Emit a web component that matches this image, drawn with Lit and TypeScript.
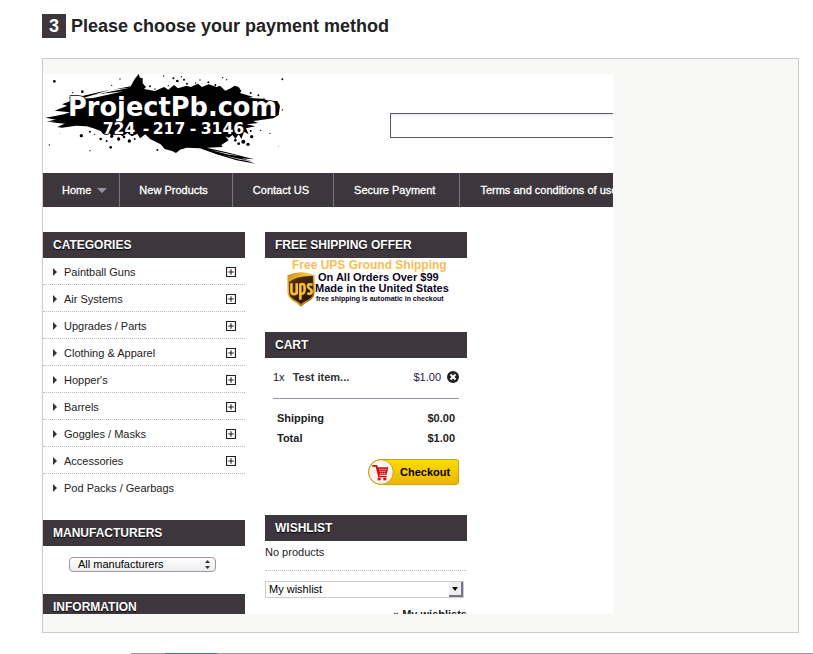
import { LitElement, html, css, svg } from "lit";
import { customElement } from "lit/decorators.js";

const NAV = ["Home", "New Products", "Contact US", "Secure Payment", "Terms and conditions of use"];

const CATEGORIES = [
  { name: "Paintball Guns", open: true },
  { name: "Air Systems", open: true },
  { name: "Upgrades / Parts", open: true },
  { name: "Clothing & Apparel", open: true },
  { name: "Hopper's", open: true },
  { name: "Barrels", open: true },
  { name: "Goggles / Masks", open: true },
  { name: "Accessories", open: true },
  { name: "Pod Packs / Gearbags", open: false },
];

// Paint drops around the logo: x, y, radius
const DROPS = [
  [43, 49, 4], [127, 80, 4], [124, 212, 5], [212, 247, 4], [150, 257, 2], [98, 83, 2], [28, 240, 2],
  [182, 222, 4], [200, 228, 3], [215, 214, 5], [236, 222, 5], [252, 216, 4], [268, 228, 5], [284, 222, 3],
  [352, 255, 3], [596, 236, 4], [610, 230, 6], [624, 238, 5], [635, 215, 5], [632, 198, 3], [586, 226, 4],
  [727, 43, 3], [727, 135, 2], [632, 84, 3], [655, 91, 3], [672, 101, 2], [548, 38, 2], [560, 44, 2],
  [400, 40, 3], [412, 48, 4], [432, 44, 3], [441, 56, 3], [385, 62, 2], [371, 33, 2], [424, 35, 2],
  [240, 42, 2], [215, 61, 2], [330, 64, 3], [345, 72, 2], [480, 45, 2], [467, 54, 2], [505, 52, 3],
  [526, 60, 3], [662, 196, 2], [690, 205, 2], [716, 245, 1], [150, 200, 3], [164, 208, 2], [60, 205, 1],
];

const logo = svg`
  <svg class="logo" viewBox="9 27 726 276" role="img" aria-label="ProjectPb.com">
    <path d="M16 158 L46 153 L72 148 L90 142 L44 137 L82 122 L66 118 L92 108 L88 97 L142 98 L136 91 L176 88 L230 72
      L272 64 L284 42 L296 27 L300 38 L308 40 L308 55 L318 66 L312 72 L345 78 L372 66 L385 74 L402 60 L414 70 L440 62
      L452 66 L474 56 L486 66 L506 58 L530 66 L540 62 L556 77 L572 70 L584 62 L596 66 L604 78 L600 84 L640 96 L625 99
      L668 101 L690 108 L712 108 L720 122 L716 150 L700 160 L668 164 L640 168 L654 174 L620 178 L646 184 L618 190
      L626 208 L612 200 L604 222 L596 208 L586 222 L578 210 L566 218 L556 214 L566 226 L544 240 L548 246 L500 248
      L560 262 L642 283 L600 280 L646 296 L590 286 L530 268 L480 250 L440 248 L420 254 L408 264 L396 258 L374 252
      L362 238 L330 222 L316 208 L300 220 L292 206 L276 214 L262 204 L248 214 L232 204 L216 212 L204 202 L190 208
      L182 198 L160 190 L140 184 L108 182 L66 188 L52 186 L74 176 L34 172 L56 166 Z"/>
    <path d="M100 96 L200 76 L270 68 L190 84 Z M90 103 L150 90 L250 79 L160 99 Z" fill="#fff"/>
    <path d="M70 118 L130 92 L210 74 L132 98 Z M20 170 L50 163 L80 170 Z M490 252 L560 264 L640 290 L550 268 Z"/>
    <path d="M510 254 L600 274 L560 268 Z M550 271 L630 289 L600 284 Z" fill="#fff"/>
    ${DROPS.map(([x, y, r]) => svg`<circle cx=${x} cy=${y} r=${r} />`)}
    <text class="logo-name" x="84" y="152">ProjectPb.com</text>
    <text class="logo-phone" x="188" y="206">724</text>
    <text class="logo-phone" x="308" y="206">-</text>
    <text class="logo-phone" x="338" y="206">217</text>
    <text class="logo-phone" x="449" y="206">-</text>
    <text class="logo-phone" x="482" y="206">3146</text>
  </svg>`;

const upsShield = svg`
  <svg class="shield" viewBox="0 0 84 106" role="img" aria-label="UPS">
    <defs>
      <linearGradient id="gold" x1="0" y1="0" x2="1" y2="1">
        <stop offset="0" stop-color="#c98a12"/><stop offset=".4" stop-color="#f8c536"/><stop offset="1" stop-color="#7c4a08"/>
      </linearGradient>
      <linearGradient id="brown" x1="0" y1="0" x2="1" y2="1">
        <stop offset="0" stop-color="#5a3510"/><stop offset="1" stop-color="#1f0f04"/>
      </linearGradient>
    </defs>
    <path d="M1 10 Q42 -8 83 10 V62 Q83 78 68 87 Q52 94 42 105 Q32 94 16 87 Q1 78 1 62 Z" fill="url(#gold)"/>
    <path d="M6 30 Q30 10 78 12 V62 Q78 75 64 83 Q50 89 42 97 Q34 89 20 83 Q6 75 6 62 Z" fill="url(#brown)"/>
    <g fill="none" stroke="#f3bd35" stroke-width="8">
      <path d="M13 34 V58 Q13 67 20 67 Q25 67 29 64 V34"/>
      <path d="M40 84 V38 Q53 32 53 48 V54 Q53 68 40 66"/>
      <path d="M77 39 Q63 34 63 43 Q63 48 69 51 Q76 55 74 62 Q70 69 61 64"/>
    </g>
  </svg>`;

const cartIcon = svg`
  <svg class="cart-icon" viewBox="0 0 78 78" aria-hidden="true">
    <circle cx="39" cy="39" r="37" fill="#f6f5ef" stroke="#c9a21a" stroke-width="3"/>
    <g fill="#c8140c">
      <path d="M13 18 H27 L30 25 H61 L56 47 H34 L36 51 H56 V55 H31 L23 23 H13 Z"/>
      <rect x="29" y="56" width="9" height="8"/><rect x="46" y="56" width="9" height="8"/>
    </g>
    <path d="M34 31 H56 M35 37 H54 M37 43 H52" stroke="#fff" stroke-width="3" stroke-dasharray="3 3"/>
  </svg>`;

@customElement("app-root")
export class AppRoot extends LitElement {
  static styles = css`
    :host {
      display: block;
      font: 11px/14px "Liberation Sans", Arial, sans-serif;
      color: #222;
      background: #fff;
    }
    * { box-sizing: border-box; }
    a { color: inherit; text-decoration: none; }
    ul { list-style: none; margin: 0; padding: 0; }
    h1, h2, p { margin: 0; }
    button, select, input { font: inherit; color: #000; margin: 0; }
    main { padding: 14px 14px 0 42px; }
    h1 { display: flex; gap: 5px; font-size: 18px; line-height: 24px; color: #222; }
    .step { width: 24px; text-align: center; background: #3d363d; color: #fff; }
    .panel {
      margin-top: 20px;
      padding: 15px 0 18px;
      border: 1px solid #ccc;
      background: #f8f8f6;
    }
    .frame { max-width: 570px; height: 540px; overflow: hidden; background: #fff; }
    .head { display: flex; gap: 105px; height: 99px; }
    .logo { display: block; flex: none; width: 242px; height: 92px; }
    .logo-name, .logo-phone {
      font-family: "DejaVu Sans", sans-serif;
      font-weight: bold;
      fill: #fff;
      stroke: #000;
      stroke-width: 4px;
      paint-order: stroke;
    }
    .logo-name { font-size: 77px; }
    .logo-phone { font-size: 47px; }
    .search {
      flex: none;
      width: 300px;
      height: 25px;
      margin-top: 39px;
      border: 1px solid #5d5969;
      border-radius: 0;
      background: #fff;
      box-shadow: inset 0 2px 2px #eee;
    }
    nav ul { display: flex; width: max-content; min-width: 100%; background: #3d363d; }
    nav li + li { border-left: 1px solid #77738a; }
    nav a {
      display: flex;
      align-items: center;
      gap: 6px;
      height: 34px;
      padding: 0 24px 0 20px;
      color: #fff;
      -webkit-text-stroke: 0.3px #fff;
    }
    nav li:first-child a { padding: 0 12px 0 19px; }
    nav li:nth-child(2) a { padding-left: 19px; }
    .down { border: 5px solid transparent; border-top-color: #9593a8; border-bottom: 0; }
    .columns { display: flex; gap: 20px; margin-top: 25px; }
    .column { flex: none; width: 202px; }
    h2 {
      height: 26px;
      padding: 0 10px;
      font-size: 12px;
      line-height: 26px;
      color: #fff;
      background: #3d363d;
      text-shadow: 0 1px 1px #000;
      text-transform: uppercase;
    }
    .categories li {
      display: flex;
      align-items: center;
      gap: 7px;
      height: 27px;
      padding: 2px 9px 0 10px;
      border-bottom: 1px dotted #bbb;
    }
    .categories li:last-child { border-color: transparent; }
    .categories a { flex: 1; }
    .arrow { border: 4px solid transparent; border-left-color: #333; border-right: 0; }
    .expand { display: flex; width: 10px; height: 10px; padding: 0; border: 0; background: none; }
    .expand svg { display: block; width: 10px; height: 10px; }
    .manufacturers { margin-top: 19px; }
    .maker { position: relative; width: 147px; margin: 11px 0 22px 26px; }
    .maker select {
      display: block;
      appearance: none;
      width: 100%;
      height: 15px;
      padding: 0 8px;
      line-height: 13px;
      border: 1px solid #9997a6;
      border-radius: 4px;
      background: linear-gradient(#fff, #ececec);
    }
    .maker svg { position: absolute; right: 6px; top: 3px; width: 5px; height: 9px; pointer-events: none; }
    .offer { display: grid; grid-template-columns: 28px 160px; height: 74px; padding-left: 22px; align-content: start; color: #0d0720; font-weight: bold; }
    .ground { grid-column: 1 / 3; padding-left: 5px; font-size: 12px; line-height: 14px; color: #f9bd52; }
    .shield { width: 28px; height: 35px; }
    .offer-lines { line-height: 11px; white-space: nowrap; }
    .offer-lines p:first-child { padding-left: 3px; }
    .offer-lines .small { padding-left: 1px; font-size: 7px; line-height: 10px; }
    .cart { height: 157px; padding: 12px 8px 0; }
    .line { display: flex; align-items: center; gap: 8px; height: 14px; }
    .line b { flex: 1; color: #333; }
    .price { margin-right: -2px; color: #1f1b45; }
    .remove { display: flex; padding: 0; border: 0; background: none; }
    .remove svg { width: 12px; height: 12px; }
    .totals { width: 100%; margin-top: 14px; padding: 9px 2px 0; border-top: 1px solid #9997a6; border-spacing: 0; font-weight: bold; }
    .totals th, .totals td { height: 20px; padding: 0 2px; text-align: left; }
    .totals td { text-align: right; }
    .checkout {
      display: flex;
      align-items: center;
      gap: 6px;
      width: 91px;
      height: 26px;
      margin: 11px 0 0 auto;
      padding: 0;
      border: 1px solid #c9a21a;
      border-radius: 13px 3px 3px 13px;
      background: linear-gradient(#fbdc00, #f0b400);
      font-weight: bold;
    }
    .cart-icon { flex: none; width: 26px; height: 26px; margin-left: -1px; }
    .empty { padding: 4px 0 11px; border-bottom: 1px dotted #bbb; }
    .wish { position: relative; width: 199px; margin: 10px 0 9px; }
    .wish select {
      display: block;
      appearance: none;
      width: 100%;
      height: 17px;
      padding: 0 3px;
      line-height: 15px;
      border: 1px solid #ccc;
      border-radius: 0;
      background: #fff;
    }
    .wish svg { position: absolute; right: 1px; top: 1px; width: 14px; height: 15px; pointer-events: none; }
    .wishlists { display: block; text-align: right; font-weight: bold; }
    footer { display: flex; height: 1px; margin: 20px 0 0 131px; background: #9997a6; }
    footer span { width: 52px; margin-left: 34px; background: #3572b5; }
  `;

  render() {
    return html`
      <main>
        <h1><span class="step">3</span>Please choose your payment method</h1>
        <section class="panel">
          <div class="frame">
            <header class="head">
              ${logo}
              <input class="search" type="search" aria-label="Search" />
            </header>
            <nav>
              <ul>
                ${NAV.map((name, i) => html`<li><a href="#">${name}${i === 0 ? html`<span class="down"></span>` : ""}</a></li>`)}
              </ul>
            </nav>
            <div class="columns">
              <div class="column">
                <h2>Categories</h2>
                <ul class="categories">
                  ${CATEGORIES.map((c) => html`
                    <li>
                      <span class="arrow"></span><a href="#">${c.name}</a>
                      ${c.open
                        ? html`<button class="expand" aria-label="Expand ${c.name}">
                            <svg viewBox="0 0 9 9"><path d="M.5 .5H8.5V8.5H.5ZM2 4.5H7M4.5 2V7" fill="none" stroke="#222" /></svg>
                          </button>`
                        : ""}
                    </li>`)}
                </ul>
                <h2 class="manufacturers">Manufacturers</h2>
                <div class="maker">
                  <select aria-label="Manufacturers"><option>All manufacturers</option></select>
                  <svg viewBox="0 0 5 9"><path d="M0 3L2.5 0L5 3ZM0 6L2.5 9L5 6Z" fill="#333" /></svg>
                </div>
                <h2>Information</h2>
              </div>
              <div class="column">
                <h2>Free shipping offer</h2>
                <div class="offer">
                  <p class="ground">Free UPS Ground Shipping</p>
                  ${upsShield}
                  <div class="offer-lines">
                    <p>On All Orders Over $99</p>
                    <p>Made in the United States</p>
                    <p class="small">free shipping is automatic in checkout</p>
                  </div>
                </div>
                <h2>Cart</h2>
                <div class="cart">
                  <div class="line">
                    <span>1x</span><b>Test item...</b><span class="price">$1.00</span>
                    <button class="remove" aria-label="Remove Test item">
                      <svg viewBox="0 0 12 12"><circle cx="6" cy="6" r="6" fill="#222" /><path d="M3.5 3.5L8.5 8.5M8.5 3.5L3.5 8.5" stroke="#fff" stroke-width="2" /></svg>
                    </button>
                  </div>
                  <table class="totals">
                    <tr><th scope="row">Shipping</th><td>$0.00</td></tr>
                    <tr><th scope="row">Total</th><td>$1.00</td></tr>
                  </table>
                  <button class="checkout">${cartIcon}Checkout</button>
                </div>
                <h2>Wishlist</h2>
                <p class="empty">No products</p>
                <div class="wish">
                  <select aria-label="Wishlist"><option>My wishlist</option></select>
                  <svg viewBox="0 0 14 15"><path d="M0 0H14V15H0Z" fill="#77738a" /><path d="M0 0H12V13H0Z" fill="#eee" /><path d="M3 5H9L6 9Z" /></svg>
                </div>
                <a class="wishlists" href="#">» My wishlists</a>
              </div>
            </div>
          </div>
        </section>
      </main>
      <footer><span></span></footer>
    `;
  }
}
